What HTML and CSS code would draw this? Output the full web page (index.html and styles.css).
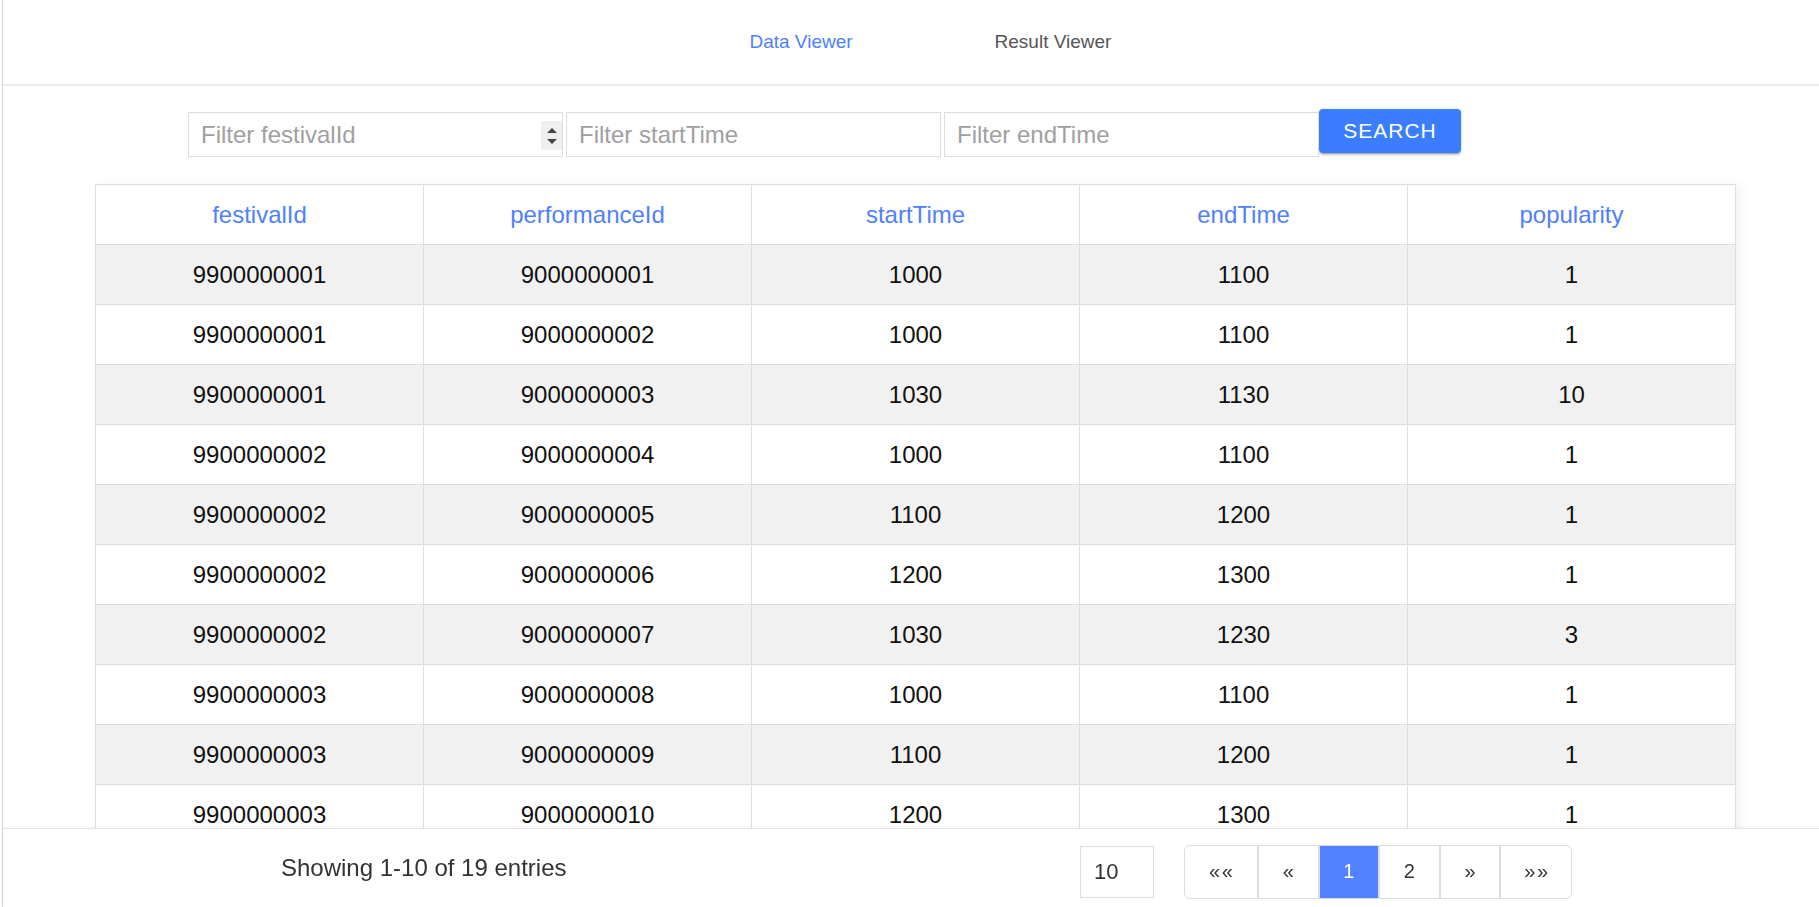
FILE: index.html
```html
<!DOCTYPE html>
<html>
<head>
<meta charset="utf-8">
<title>Data Viewer</title>
<link rel="stylesheet" href="styles.css">
</head>
<body>
<div class="app">
  <nav class="nav">
    <a class="tab active">Data Viewer</a>
    <a class="tab">Result Viewer</a>
  </nav>
  <div class="filters">
    <div class="field num">
      <input type="text" placeholder="Filter festivalId">
      <span class="spin"><svg width="12" height="22" viewBox="0 0 12 22"><path d="M1 8 L6 3 L11 8 Z" fill="#444"/><path d="M1 14 L6 19 L11 14 Z" fill="#444"/></svg></span>
    </div>
    <div class="field"><input type="text" placeholder="Filter startTime"></div>
    <div class="field"><input type="text" placeholder="Filter endTime"></div>
    <button class="search">SEARCH</button>
  </div>
  <div class="table-wrap">
    <table class="grid">
      <thead>
        <tr><th>festivalId</th><th>performanceId</th><th>startTime</th><th>endTime</th><th>popularity</th></tr>
      </thead>
      <tbody>
        <tr><td>9900000001</td><td>9000000001</td><td>1000</td><td>1100</td><td>1</td></tr>
        <tr><td>9900000001</td><td>9000000002</td><td>1000</td><td>1100</td><td>1</td></tr>
        <tr><td>9900000001</td><td>9000000003</td><td>1030</td><td>1130</td><td>10</td></tr>
        <tr><td>9900000002</td><td>9000000004</td><td>1000</td><td>1100</td><td>1</td></tr>
        <tr><td>9900000002</td><td>9000000005</td><td>1100</td><td>1200</td><td>1</td></tr>
        <tr><td>9900000002</td><td>9000000006</td><td>1200</td><td>1300</td><td>1</td></tr>
        <tr><td>9900000002</td><td>9000000007</td><td>1030</td><td>1230</td><td>3</td></tr>
        <tr><td>9900000003</td><td>9000000008</td><td>1000</td><td>1100</td><td>1</td></tr>
        <tr><td>9900000003</td><td>9000000009</td><td>1100</td><td>1200</td><td>1</td></tr>
        <tr><td>9900000003</td><td>9000000010</td><td>1200</td><td>1300</td><td>1</td></tr>
      </tbody>
    </table>
  </div>
</div>
<footer class="footer">
  <div class="info">Showing 1-10 of 19 entries</div>
  <div class="pager-area">
    <div class="size">10</div>
    <div class="pager">
      <span class="pg">«&#8202;«</span>
      <span class="pg">«</span>
      <span class="pg current">1</span>
      <span class="pg">2</span>
      <span class="pg">»</span>
      <span class="pg last">»&#8202;»</span>
    </div>
  </div>
</footer>
</body>
</html>
```
FILE: styles.css
```css
html, body {
  margin: 0;
  padding: 0;
  height: 100%;
  overflow: hidden;
  background: #fff;
  font-family: "Liberation Sans", Arial, sans-serif;
}

.app {
  margin-left: 2px;
  border-left: 1px solid #d4d4d4;
  min-height: 100%;
}

.nav {
  height: 84px;
  border-bottom: 2px solid #ececec;
  display: flex;
  justify-content: center;
  align-items: center;
  padding-left: 32px;
}

.tab {
  width: 252px;
  text-align: center;
  font-size: 19px;
  color: #555;
  cursor: pointer;
  padding-bottom: 1px;
}

.tab.active {
  color: #4d7fff;
}

.filters {
  display: flex;
  align-items: flex-start;
  gap: 3px;
  padding-left: 185px;
  margin-top: 26px;
}

.field {
  position: relative;
  width: 375px;
  height: 45px;
  box-sizing: border-box;
  border: 1px solid #dcdcdc;
  background: #fff;
}

.field input {
  width: 100%;
  height: 100%;
  box-sizing: border-box;
  border: none;
  outline: none;
  padding: 0 12px;
  font-family: "Liberation Sans", Arial, sans-serif;
  font-size: 24px;
  color: #333;
  background: transparent;
}

.field input::placeholder {
  color: #a0a0a0;
}

.field.num input {
  padding-right: 34px;
}

.spin {
  position: absolute;
  right: 0;
  top: 8px;
  width: 21px;
  height: 29px;
  background: #efefef;
  display: flex;
  align-items: center;
  justify-content: center;
}

.search {
  margin-top: -3px;
  margin-left: -3px;
  width: 142px;
  height: 44px;
  border: none;
  border-radius: 4px;
  background: #3b7dff;
  color: #fff;
  font-family: "Liberation Sans", Arial, sans-serif;
  font-size: 21px;
  letter-spacing: 1px;
  box-shadow: 0 3px 1px -2px rgba(0,0,0,0.2), 0 2px 2px 0 rgba(0,0,0,0.14), 0 1px 5px 0 rgba(0,0,0,0.12);
  cursor: pointer;
}

.table-wrap {
  margin: 27px 0 0 92px;
  width: 1641px;
  box-shadow: 4px 0 12px rgba(0,0,0,0.05);
}

.grid {
  width: 100%;
  border-collapse: collapse;
  table-layout: fixed;
  font-size: 24px;
}

.grid th,
.grid td {
  height: 60px;
  box-sizing: border-box;
  border: 1px solid #dedede;
  text-align: center;
  padding: 0;
  font-weight: normal;
}

.grid th {
  color: #4f80ff;
  background: #fff;
}

.grid td {
  color: #111;
}

.grid tbody tr:nth-child(odd) td {
  background: #f1f1f1;
}

.footer {
  position: fixed;
  left: 3px;
  right: 0;
  bottom: 0;
  height: 78px;
  background: #fff;
  border-top: 1px solid #e3e3e3;
  box-shadow: 0 -1px 2px rgba(0,0,0,0.04);
  display: flex;
  align-items: center;
}

.info {
  margin-left: 278px;
  font-size: 24px;
  color: #333;
  width: 799px;
}

.pager-area {
  display: flex;
  align-items: center;
  gap: 30px;
  margin-top: 7px;
}

.size {
  width: 74px;
  height: 52px;
  box-sizing: border-box;
  border: 1px solid #dcdcdc;
  display: flex;
  align-items: center;
  padding-left: 13px;
  font-size: 22px;
  color: #333;
}

.pager {
  display: flex;
  height: 54px;
  box-sizing: border-box;
  border: 1px solid #dcdcdc;
  border-radius: 6px;
  overflow: hidden;
}

.pg {
  display: flex;
  align-items: center;
  justify-content: center;
  padding: 0 23.3px;
  min-width: 12px;
  font-size: 20px;
  color: #333;
  border-left: 2px solid #dcdcdc;
}

.pg:first-child {
  border-left: none;
  padding: 0 24px;
}

.pg.last {
  padding: 0 23px;
}

.pg.current {
  background: #5282ff;
  color: #fff;
}
```
